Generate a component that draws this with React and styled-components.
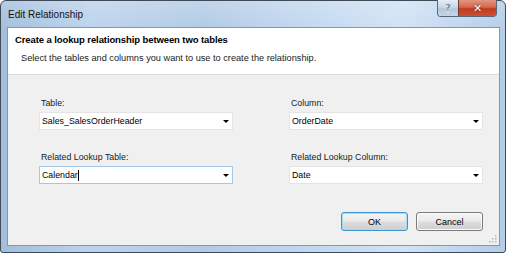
import React from "react";
import styled, { createGlobalStyle } from "styled-components";

const GlobalStyle = createGlobalStyle`
  html, body {
    margin: 0;
    padding: 0;
    background: #ffffff;
  }
  body {
    font-family: "Liberation Sans", Arial, sans-serif;
    color: #000000;
  }
`;

const Window = styled.div`
  box-sizing: border-box;
  width: 506px;
  height: 253px;
  display: flex;
  flex-direction: column;
  padding: 0 5px 6px 6px;
  border: 1px solid #3f4a57;
  border-radius: 6px 6px 3px 3px;
  background: linear-gradient(
      180deg,
      rgba(255, 255, 255, 0.2) 0%,
      rgba(255, 255, 255, 0) 12%
    ),
    linear-gradient(
      90deg,
      #a3bedc 0%,
      #bcd3ec 18%,
      #b2cae6 40%,
      #c3d8ef 62%,
      #d0e2f5 80%,
      #b5cce8 100%
    );
`;

const TitleBar = styled.div`
  height: 26px;
  display: flex;
  justify-content: space-between;
  align-items: flex-start;
  flex-shrink: 0;
`;

const Title = styled.div`
  padding: 8px 0 0 1px;
  font-size: 10px;
  line-height: 12px;
  color: #111111;
`;

const CaptionButtons = styled.div`
  display: flex;
  margin: -1px 3px 0 0;
  border: 1px solid #56677a;
  border-top: none;
  border-radius: 0 0 4px 4px;
  overflow: hidden;
`;

const CaptionButton = styled.div`
  box-sizing: border-box;
  width: ${(p) => p.$width}px;
  height: 16px;
  display: flex;
  align-items: center;
  justify-content: center;
  font-family: "DejaVu Sans", sans-serif;
  font-weight: bold;
  font-size: ${(p) => (p.$close ? 11 : 9)}px;
  color: ${(p) => (p.$close ? "#ffffff" : "#6f8296")};
  text-shadow: ${(p) =>
    p.$close ? "0 0 2px #5a1208" : "0 1px 0 #ffffff"};
  background: ${(p) =>
    p.$close
      ? "linear-gradient(180deg, #e49583 0%, #d4674f 45%, #c13a20 55%, #cc4f31 100%)"
      : "linear-gradient(180deg, #e3ecf6 0%, #c9d8e8 45%, #b4c6da 55%, #c6d6e7 100%)"};
  border-left: ${(p) => (p.$close ? "1px solid #6e3b33" : "none")};
`;

const Client = styled.div`
  position: relative;
  flex: 1;
  display: flex;
  flex-direction: column;
  border: 1px solid #8397ad;
  background: #f0f0f0;
`;

const Header = styled.div`
  height: 47px;
  box-sizing: border-box;
  padding: 6px 0 0 7px;
  background: #ffffff;
  border-bottom: 1px solid #dcdcdc;
`;

const HeaderTitle = styled.div`
  font-size: 9.5px;
  font-weight: bold;
  letter-spacing: -0.1px;
  line-height: 12px;
`;

const HeaderText = styled.div`
  margin: 6px 0 0 6px;
  font-size: 9.2px;
  line-height: 12px;
  color: #1a1a1a;
`;

const Body = styled.div`
  flex: 1;
  display: flex;
  flex-direction: column;
  padding: 23px 16px 0 31px;
`;

const FormGrid = styled.div`
  display: grid;
  grid-template-columns: 194px 194px;
  column-gap: 56px;
  row-gap: 22px;
`;

const Field = styled.div`
  display: flex;
  flex-direction: column;
  gap: 3px;
`;

const Label = styled.div`
  padding-left: 2px;
  font-size: 8.8px;
  line-height: 11px;
  color: #1a1a1a;
`;

const Combo = styled.div`
  box-sizing: border-box;
  height: 18px;
  display: flex;
  align-items: center;
  justify-content: space-between;
  padding-left: 2px;
  background: #ffffff;
  border: 1px solid ${(p) => (p.$focused ? "#a3c7e7" : "#e4e4e4")};
  font-size: 8.8px;
  color: #000000;
`;

const ComboValue = styled.span`
  display: flex;
  align-items: center;
`;

const Caret = styled.span`
  display: inline-block;
  width: 1px;
  height: 11px;
  background: #000000;
`;

const Arrow = styled.span`
  width: 0;
  height: 0;
  margin-right: 3px;
  border-left: 3px solid transparent;
  border-right: 3px solid transparent;
  border-top: 3px solid #000000;
`;

const ButtonRow = styled.div`
  display: flex;
  justify-content: flex-end;
  gap: 8px;
  margin-top: 28px;
`;

const Button = styled.div`
  box-sizing: border-box;
  width: 67px;
  height: 19px;
  display: flex;
  align-items: center;
  justify-content: center;
  font-size: 9px;
  color: #000000;
  border: 1px solid ${(p) => (p.$default ? "#3c94d0" : "#7a7a7a")};
  border-radius: 3px;
  box-shadow: inset 0 0 0 1px
    ${(p) => (p.$default ? "#a6dbf5" : "#fbfbfb")};
  background: linear-gradient(
    180deg,
    #f3f3f3 0%,
    #ebebeb 48%,
    #dddddd 52%,
    #cfcfcf 100%
  );
`;

const Grip = styled.svg`
  position: absolute;
  right: 2px;
  bottom: 2px;
`;

const fields = [
  { label: "Table:", value: "Sales_SalesOrderHeader" },
  { label: "Column:", value: "OrderDate" },
  { label: "Related Lookup Table:", value: "Calendar", focused: true },
  { label: "Related Lookup Column:", value: "Date" },
];

export default function App() {
  return (
    <>
      <GlobalStyle />
      <Window>
        <TitleBar>
          <Title>Edit Relationship</Title>
          <CaptionButtons>
            <CaptionButton $width={20}>?</CaptionButton>
            <CaptionButton $width={38} $close>
              ✕
            </CaptionButton>
          </CaptionButtons>
        </TitleBar>
        <Client>
          <Header>
            <HeaderTitle>Create a lookup relationship between two tables</HeaderTitle>
            <HeaderText>
              Select the tables and columns you want to use to create the
              relationship.
            </HeaderText>
          </Header>
          <Body>
            <FormGrid>
              {fields.map((f) => (
                <Field key={f.label}>
                  <Label>{f.label}</Label>
                  <Combo $focused={f.focused}>
                    <ComboValue>
                      {f.value}
                      {f.focused && <Caret />}
                    </ComboValue>
                    <Arrow />
                  </Combo>
                </Field>
              ))}
            </FormGrid>
            <ButtonRow>
              <Button $default>OK</Button>
              <Button>Cancel</Button>
            </ButtonRow>
          </Body>
          <Grip width="8" height="8" viewBox="0 0 8 8">
            <g fill="#b8b8b8">
              <rect x="6" y="0" width="1.5" height="1.5" />
              <rect x="3" y="3" width="1.5" height="1.5" />
              <rect x="6" y="3" width="1.5" height="1.5" />
              <rect x="0" y="6" width="1.5" height="1.5" />
              <rect x="3" y="6" width="1.5" height="1.5" />
              <rect x="6" y="6" width="1.5" height="1.5" />
            </g>
          </Grip>
        </Client>
      </Window>
    </>
  );
}
